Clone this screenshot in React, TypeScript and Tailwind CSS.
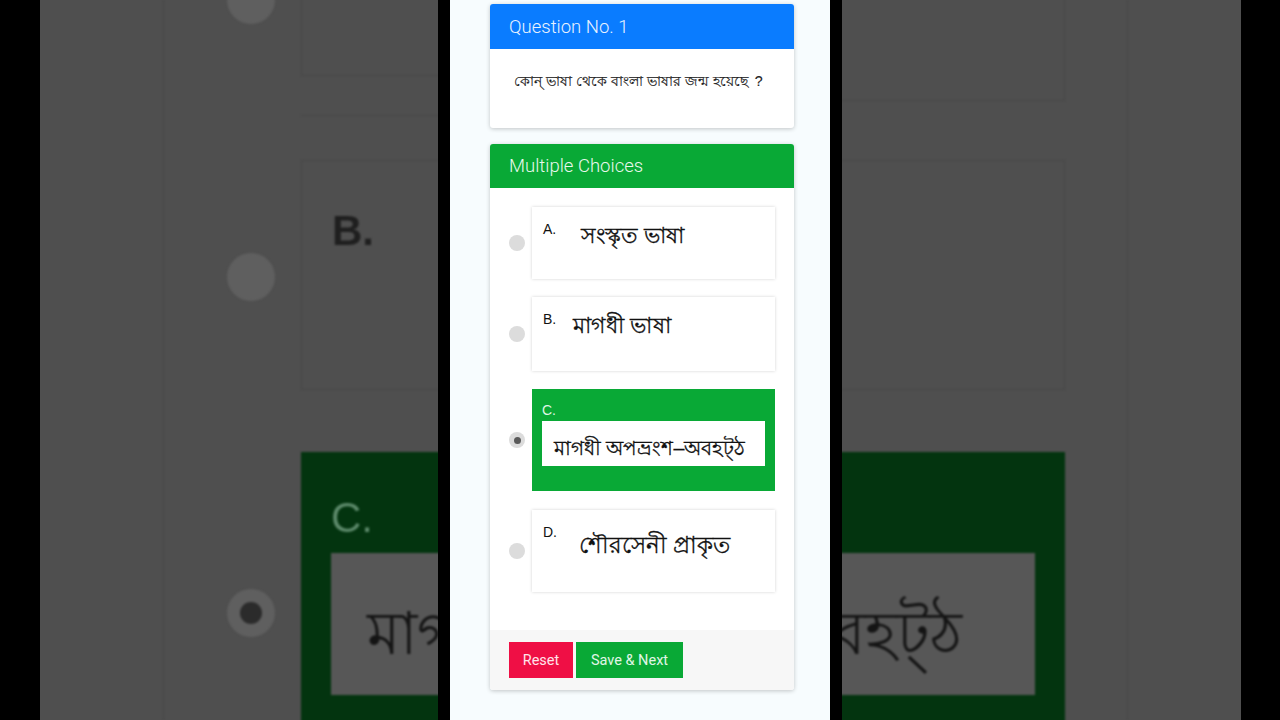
const font = { fontFamily: '"Liberation Sans", "Noto Sans", "DejaVu Sans", sans-serif' };
const light = { fontFamily: 'Roboto, "Liberation Sans", sans-serif' };

function Radio({ checked = false, mt = '' }: { checked?: boolean; mt?: string }) {
  return (
    <div className={`w-[16px] h-[16px] shrink-0 rounded-full bg-[#dcdcdc] flex items-center justify-center ${mt}`}>
      {checked && <div className="w-[7px] h-[7px] rounded-full bg-[#5a5a5a]" />}
    </div>
  );
}

function Option({ letter, text, h, indent, textTop, textSize }: { letter: string; text: string; h: string; indent: string; textTop: string; textSize: string }) {
  return (
    <div className="flex items-center pl-[19px] pr-[19px]">
      <Radio />
      <div className={`ml-[7px] w-[243px] ${h} bg-white shadow-[0_0_3px_rgba(0,0,0,0.18)] pl-[11px] pt-[15px] flex items-start`}>
        <span className="text-[14px] leading-[14px] text-[#111] w-[20px] shrink-0">{letter}</span>
        <span className={`${indent} ${textTop} ${textSize} leading-[28px] font-medium text-[#111] [-webkit-text-stroke:0.3px_#111] whitespace-nowrap`}>{text}</span>
      </div>
    </div>
  );
}

function LeftBackdrop() {
  return (
    <div className="relative w-[398px] h-full bg-[#4f4f4f] overflow-hidden shrink-0">
      <div className="absolute inset-0 blur-[1px]">
        <div className="absolute left-[123px] top-0 w-px h-full bg-[#484848]" />
        <div className="absolute left-[261px] top-[-40px] w-[200px] h-[116px] border border-[#484848]" />
        <div className="absolute left-[261px] top-[115px] w-[200px] h-[1px] bg-[#484848]" />
        <div className="absolute left-[261px] top-[160px] w-[200px] h-[230px] border border-[#484848]">
          <span className="absolute left-[30px] top-[46px] text-[42px] leading-[48px] font-bold text-[#1f1f1f]">B.</span>
        </div>
        <div className="absolute left-[187px] top-[-24px] w-[48px] h-[48px] rounded-full bg-[#5f5f5f]" />
        <div className="absolute left-[187px] top-[253px] w-[48px] h-[48px] rounded-full bg-[#5f5f5f]" />
        <div className="absolute left-[187px] top-[589px] w-[48px] h-[48px] rounded-full bg-[#5f5f5f] flex items-center justify-center">
          <div className="w-[22px] h-[22px] rounded-full bg-[#2b2b2b]" />
        </div>
        <div className="absolute left-[261px] top-[452px] w-[200px] h-[320px] bg-[#03340f]">
          <span className="absolute left-[30px] top-[42px] text-[42px] leading-[48px] text-[#5d8a6b]">C.</span>
          <div className="absolute left-[30px] top-[101px] w-[200px] h-[142px] bg-[#575757] pl-[36px] pt-[46px] overflow-hidden">
            <span className="text-[60px] leading-[70px] font-medium text-[#141414] whitespace-nowrap">মাগ</span>
          </div>
        </div>
      </div>
    </div>
  );
}

function RightBackdrop() {
  return (
    <div className="relative w-[399px] h-full bg-[#4f4f4f] overflow-hidden shrink-0">
      <div className="absolute inset-0 blur-[1px]">
        <div className="absolute left-[285px] top-0 w-px h-full bg-[#484848]" />
        <div className="absolute left-[-20px] top-[-40px] w-[243px] h-[141px] border border-[#484848]" />
        <div className="absolute left-[-20px] top-[160px] w-[243px] h-[230px] border border-[#484848]" />
        <div className="absolute left-[-20px] top-[452px] w-[243px] h-[320px] bg-[#03340f]">
          <div className="absolute left-0 top-[101px] w-[213px] h-[142px] bg-[#575757] overflow-hidden flex justify-end pr-[73px] pt-[46px]">
            <span className="text-[60px] leading-[70px] font-medium text-[#141414] whitespace-nowrap">বহট্‌ঠ</span>
          </div>
        </div>
      </div>
    </div>
  );
}

export default function App() {
  return (
    <div className="w-[1280px] h-[720px] overflow-hidden bg-black flex pl-[40px]" style={font}>
      <LeftBackdrop />
      <div className="w-[404px] h-full bg-black px-[12px] shrink-0">
        <div className="w-[380px] h-full bg-[#f7fcfe] pl-[40px] pr-[36px] pt-[4px]">
          <div className="bg-white rounded-[3px] shadow-[0_1px_4px_rgba(0,0,0,0.22)] h-[124px] overflow-hidden">
            <div className="h-[45px] bg-[#0a7cff] text-[#e8f3ff] text-[18.5px] leading-[46px] pl-[19px] font-light" style={light}>Question No. 1</div>
            <p className="pl-[24px] flex gap-[7px] text-[14.2px] leading-[20px] pt-[22px] font-medium text-[#222] [-webkit-text-stroke:0.15px_#222] whitespace-nowrap">
              <span>কোন্ ভাষা থেকে বাংলা ভাষার জন্ম হয়েছে</span>
              <span>?</span>
            </p>
          </div>
          <div className="mt-[16px] bg-white rounded-[3px] shadow-[0_1px_4px_rgba(0,0,0,0.22)] h-[546px] overflow-hidden flex flex-col">
            <div className="h-[44px] bg-[#09a936] text-[#e8f8ec] text-[18.5px] leading-[44px] pl-[19px] shrink-0 font-light" style={light}>Multiple Choices</div>
            <div className="flex-1 pt-[19px] flex flex-col gap-[18px]">
              <Option letter="A." text="সংস্কৃত ভাষা" h="h-[72px]" indent="ml-[18px]" textTop="mt-[0px]" textSize="text-[22px]" />
              <Option letter="B." text="মাগধী ভাষা" h="h-[74px]" indent="ml-[10px]" textTop="mt-[0px]" textSize="text-[22px] tracking-[0.3px]" />
              <div className="flex items-start pl-[19px] pr-[19px]">
                <Radio checked mt="mt-[43px]" />
                <div className="ml-[7px] w-[243px] h-[102px] bg-[#09a936] pl-[10px] pr-[10px] pt-[14px]">
                  <div className="text-[14px] leading-[14px] text-[#dff5e5]">C.</div>
                  <div className="mt-[4px] h-[45px] bg-white pl-[12px] pt-[5px] text-[19.6px] leading-[45px] font-medium text-[#111] [-webkit-text-stroke:0.3px_#111] whitespace-nowrap">মাগধী অপভ্রংশ–অবহট্‌ঠ</div>
                </div>
              </div>
              <div className="mt-[1px]">
                <Option letter="D." text="শৌরসেনী প্রাকৃত" h="h-[82px]" indent="ml-[16px]" textTop="mt-[7px]" textSize="text-[22.5px]" />
              </div>
            </div>
            <div className="h-[60px] bg-[#f7f7f7] shrink-0 pl-[19px] pt-[12px] flex gap-[3px]">
              <button className="w-[64px] h-[36px] pt-[1px] bg-[#ef0f45] text-[#ffe3ea] text-[14.5px]" style={light}>Reset</button>
              <button className="w-[107px] h-[36px] pt-[1px] bg-[#09a936] text-[#e0f6e6] text-[14.5px]" style={light}>Save &amp; Next</button>
            </div>
          </div>
        </div>
      </div>
      <RightBackdrop />
    </div>
  );
}
